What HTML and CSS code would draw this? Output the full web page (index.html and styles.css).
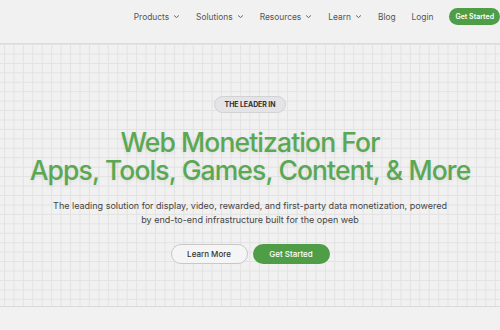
FILE: index.html
```html
<!DOCTYPE html>
<html>
<head>
<meta charset="utf-8">
<link rel="stylesheet" href="styles.css">
</head>
<body>
<header class="header">
  <nav class="nav">
    <a class="nav-item">Products <svg class="chev" viewBox="0 0 10 6"><path d="M1.5 1.5 5 4.5 8.5 1.5"/></svg></a>
    <a class="nav-item">Solutions <svg class="chev" viewBox="0 0 10 6"><path d="M1.5 1.5 5 4.5 8.5 1.5"/></svg></a>
    <a class="nav-item">Resources <svg class="chev" viewBox="0 0 10 6"><path d="M1.5 1.5 5 4.5 8.5 1.5"/></svg></a>
    <a class="nav-item">Learn <svg class="chev" viewBox="0 0 10 6"><path d="M1.5 1.5 5 4.5 8.5 1.5"/></svg></a>
    <a class="nav-item">Blog</a>
    <a class="nav-item">Login</a>
    <a class="nav-cta">Get Started</a>
  </nav>
</header>
<main class="hero">
  <span class="badge">THE LEADER IN</span>
  <h1 class="title">Web Monetization For<br>Apps, Tools, Games, Content, &amp; More</h1>
  <p class="lead">The leading solution for display, video, rewarded, and first-party data monetization, powered<br>by end-to-end infrastructure built for the open web</p>
  <div class="actions">
    <a class="btn btn-outline">Learn More</a>
    <a class="btn btn-fill">Get Started</a>
  </div>
</main>
<div class="below"></div>
</body>
</html>
```
FILE: styles.css
```css
* { box-sizing: border-box; }
html, body { margin: 0; padding: 0; }
body {
  width: 500px;
  height: 330px;
  overflow: hidden;
  background: #f1f1f1;
  font-family: Inter, "Noto Sans", sans-serif;
  color: #333;
}
.header {
  height: 44px;
  border-bottom: 1px solid #dcdcdc;
  display: flex;
  justify-content: flex-end;
  align-items: flex-start;
  padding-top: 8px;
}
.nav {
  display: flex;
  align-items: center;
  gap: 16px;
  margin-right: 0;
}
.nav-item {
  font-size: 8.4px;
  color: #555;
  display: flex;
  align-items: center;
  gap: 4px;
}
.chev {
  width: 7px;
  height: 5px;
  fill: none;
  stroke: #555;
  stroke-width: 1.3;
}
.nav-cta {
  background: #4f9d47;
  color: #fff;
  font-size: 7px;
  font-weight: 600;
  padding: 0 6px;
  height: 17px;
  line-height: 17px;
  border-radius: 9px;
  margin-left: 0;
}
.hero {
  height: 263px;
  border-bottom: 1px solid #dadada;
  background-color: #f1f1f1;
  background-image:
    linear-gradient(to right, #e2e2e2 1px, transparent 1px),
    linear-gradient(to bottom, #e2e2e2 1px, transparent 1px);
  background-size: 9.45px 9.45px;
  background-position: 4px 0px;
  display: flex;
  flex-direction: column;
  align-items: center;
  padding-top: 52px;
}
.badge {
  font-size: 7px;
  font-weight: 700;
  color: #333;
  background: #e4e4e7;
  border: 1px solid #d2d2d5;
  border-radius: 9px;
  height: 17px;
  line-height: 15px;
  padding: 0 10px;
  letter-spacing: -0.1px;
}
.title {
  margin: 15px 0 0;
  font-size: 26.5px;
  line-height: 28px;
  font-weight: 500;
  letter-spacing: -0.9px;
  color: #5aa853;
  text-align: center;
  text-shadow: 0 2px 4px rgba(0,0,0,0.08);
}
.lead {
  margin: 15px 0 0;
  font-size: 9px;
  line-height: 14px;
  color: #444;
  text-align: center;
}
.actions {
  margin-top: 17px;
  display: flex;
  gap: 5px;
}
.btn {
  height: 20px;
  width: 77px;
  border-radius: 10px;
  font-size: 8px;
  font-weight: 500;
  display: flex;
  align-items: center;
  justify-content: center;
}
.btn-outline {
  border: 1px solid #c8c8c8;
  background: #f5f5f5;
  color: #333;
}
.btn-fill {
  background: #4f9d47;
  color: #fff;
}
```
